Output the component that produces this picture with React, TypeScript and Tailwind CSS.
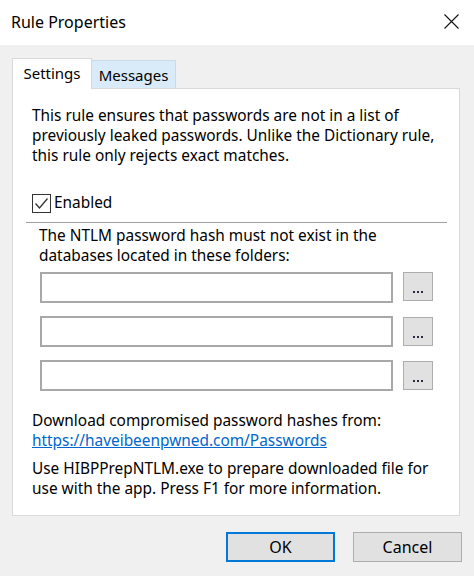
import React from "react";

function BrowseButton() {
  return (
    <button className="w-[30px] h-[29px] bg-[#e1e1e1] border border-[#adadad] flex items-end justify-center pb-[7px]">
      <span className="flex gap-[2px]">
        <span className="w-[2px] h-[2px] bg-[#2a2a40]" />
        <span className="w-[2px] h-[2px] bg-[#2a2a40]" />
        <span className="w-[2px] h-[2px] bg-[#2a2a40]" />
      </span>
    </button>
  );
}

function FolderRow({ btnTop }: { btnTop: string }) {
  return (
    <div className="flex items-start">
      <div className="w-[353px] h-[31px] bg-white border-2 border-[#a8a8a8]" />
      <div className={`ml-[10px] ${btnTop}`}>
        <BrowseButton />
      </div>
    </div>
  );
}

export default function App() {
  return (
    <div
      className="w-[474px] h-[576px] bg-[#f0f0f0] text-black overflow-hidden"
      style={{ fontFamily: '"Noto Sans", "Liberation Sans", Arial, sans-serif' }}
    >
      {/* Title bar */}
      <div className="h-[45px] bg-white flex items-center justify-between pl-[11px] pr-[15px]">
        <span className="text-[16px] leading-none pb-[2px]">Rule Properties</span>
        <svg width="15" height="15" viewBox="0 0 15 15" className="mb-[3px]">
          <path d="M0.5 0.5 L14.5 14.5 M14.5 0.5 L0.5 14.5" stroke="#111" strokeWidth="1.1" fill="none" />
        </svg>
      </div>

      {/* Tabs */}
      <div className="pl-[12px] pt-[12px] flex items-end h-[43px]">
        <div className="w-[80px] h-[31px] bg-white border border-b-0 border-[#d9d9d9] flex items-center justify-center text-[15px] relative z-10 -mb-px pb-[2px]">
          Settings
        </div>
        <div className="w-[84px] h-[28px] bg-[#d9ebf9] border border-b-0 border-l-0 border-[#c5dcef] flex items-center justify-center text-[15px] pt-[1px]">
          Messages
        </div>
      </div>

      {/* Panel */}
      <div className="ml-[12px] w-[448px] h-[428px] bg-white border border-[#d9d9d9] text-[15.4px] leading-[20px]">
        <div className="pl-[19px] pt-[17px]">
          This rule ensures that passwords are not in a list of
          <br />
          previously leaked passwords. Unlike the Dictionary rule,
          <br />
          this rule only rejects exact matches.
        </div>

        <div className="pl-[19px] mt-[27px] flex items-center">
          <div className="w-[19px] h-[19px] border border-[#333] flex items-center justify-center bg-white">
            <svg width="15" height="15" viewBox="0 0 15 15">
              <path d="M1.5 7.5 L5.5 12 L13.5 2.5" stroke="#333" strokeWidth="1.3" fill="none" />
            </svg>
          </div>
          <span className="ml-[3px]">Enabled</span>
        </div>

        <div className="ml-[13px] mr-[12px] mt-[9px] border-t border-[#a0a0a0]" />

        <div className="pl-[26px] pt-[3px]">
          The NTLM password hash must not exist in the
          <br />
          databases located in these folders:
        </div>

        <div className="pl-[27px] mt-[6px] flex flex-col gap-[13px]">
          <FolderRow btnTop="mt-0" />
          <FolderRow btnTop="mt-[1px]" />
          <FolderRow btnTop="mt-[1px]" />
        </div>

        <div className="pl-[19px] mt-[20px]">
          Download compromised password hashes from:
          <br />
          <a href="#" className="text-[#0066cc] underline">
            https://haveibeenpwned.com/Passwords
          </a>
        </div>

        <div className="pl-[19px] mt-[8px]">
          Use HIBPPrepNTLM.exe to prepare downloaded file for
          <br />
          use with the app. Press F1 for more information.
        </div>
      </div>

      {/* Buttons */}
      <div className="flex justify-end gap-[18px] pr-[12px] mt-[16px]">
        <button className="w-[109px] h-[30px] bg-[#e1e1e1] border-2 border-[#0078d7] text-[16px]">
          OK
        </button>
        <button className="w-[109px] h-[30px] bg-[#e1e1e1] border border-[#adadad] text-[16px]">
          Cancel
        </button>
      </div>
    </div>
  );
}
